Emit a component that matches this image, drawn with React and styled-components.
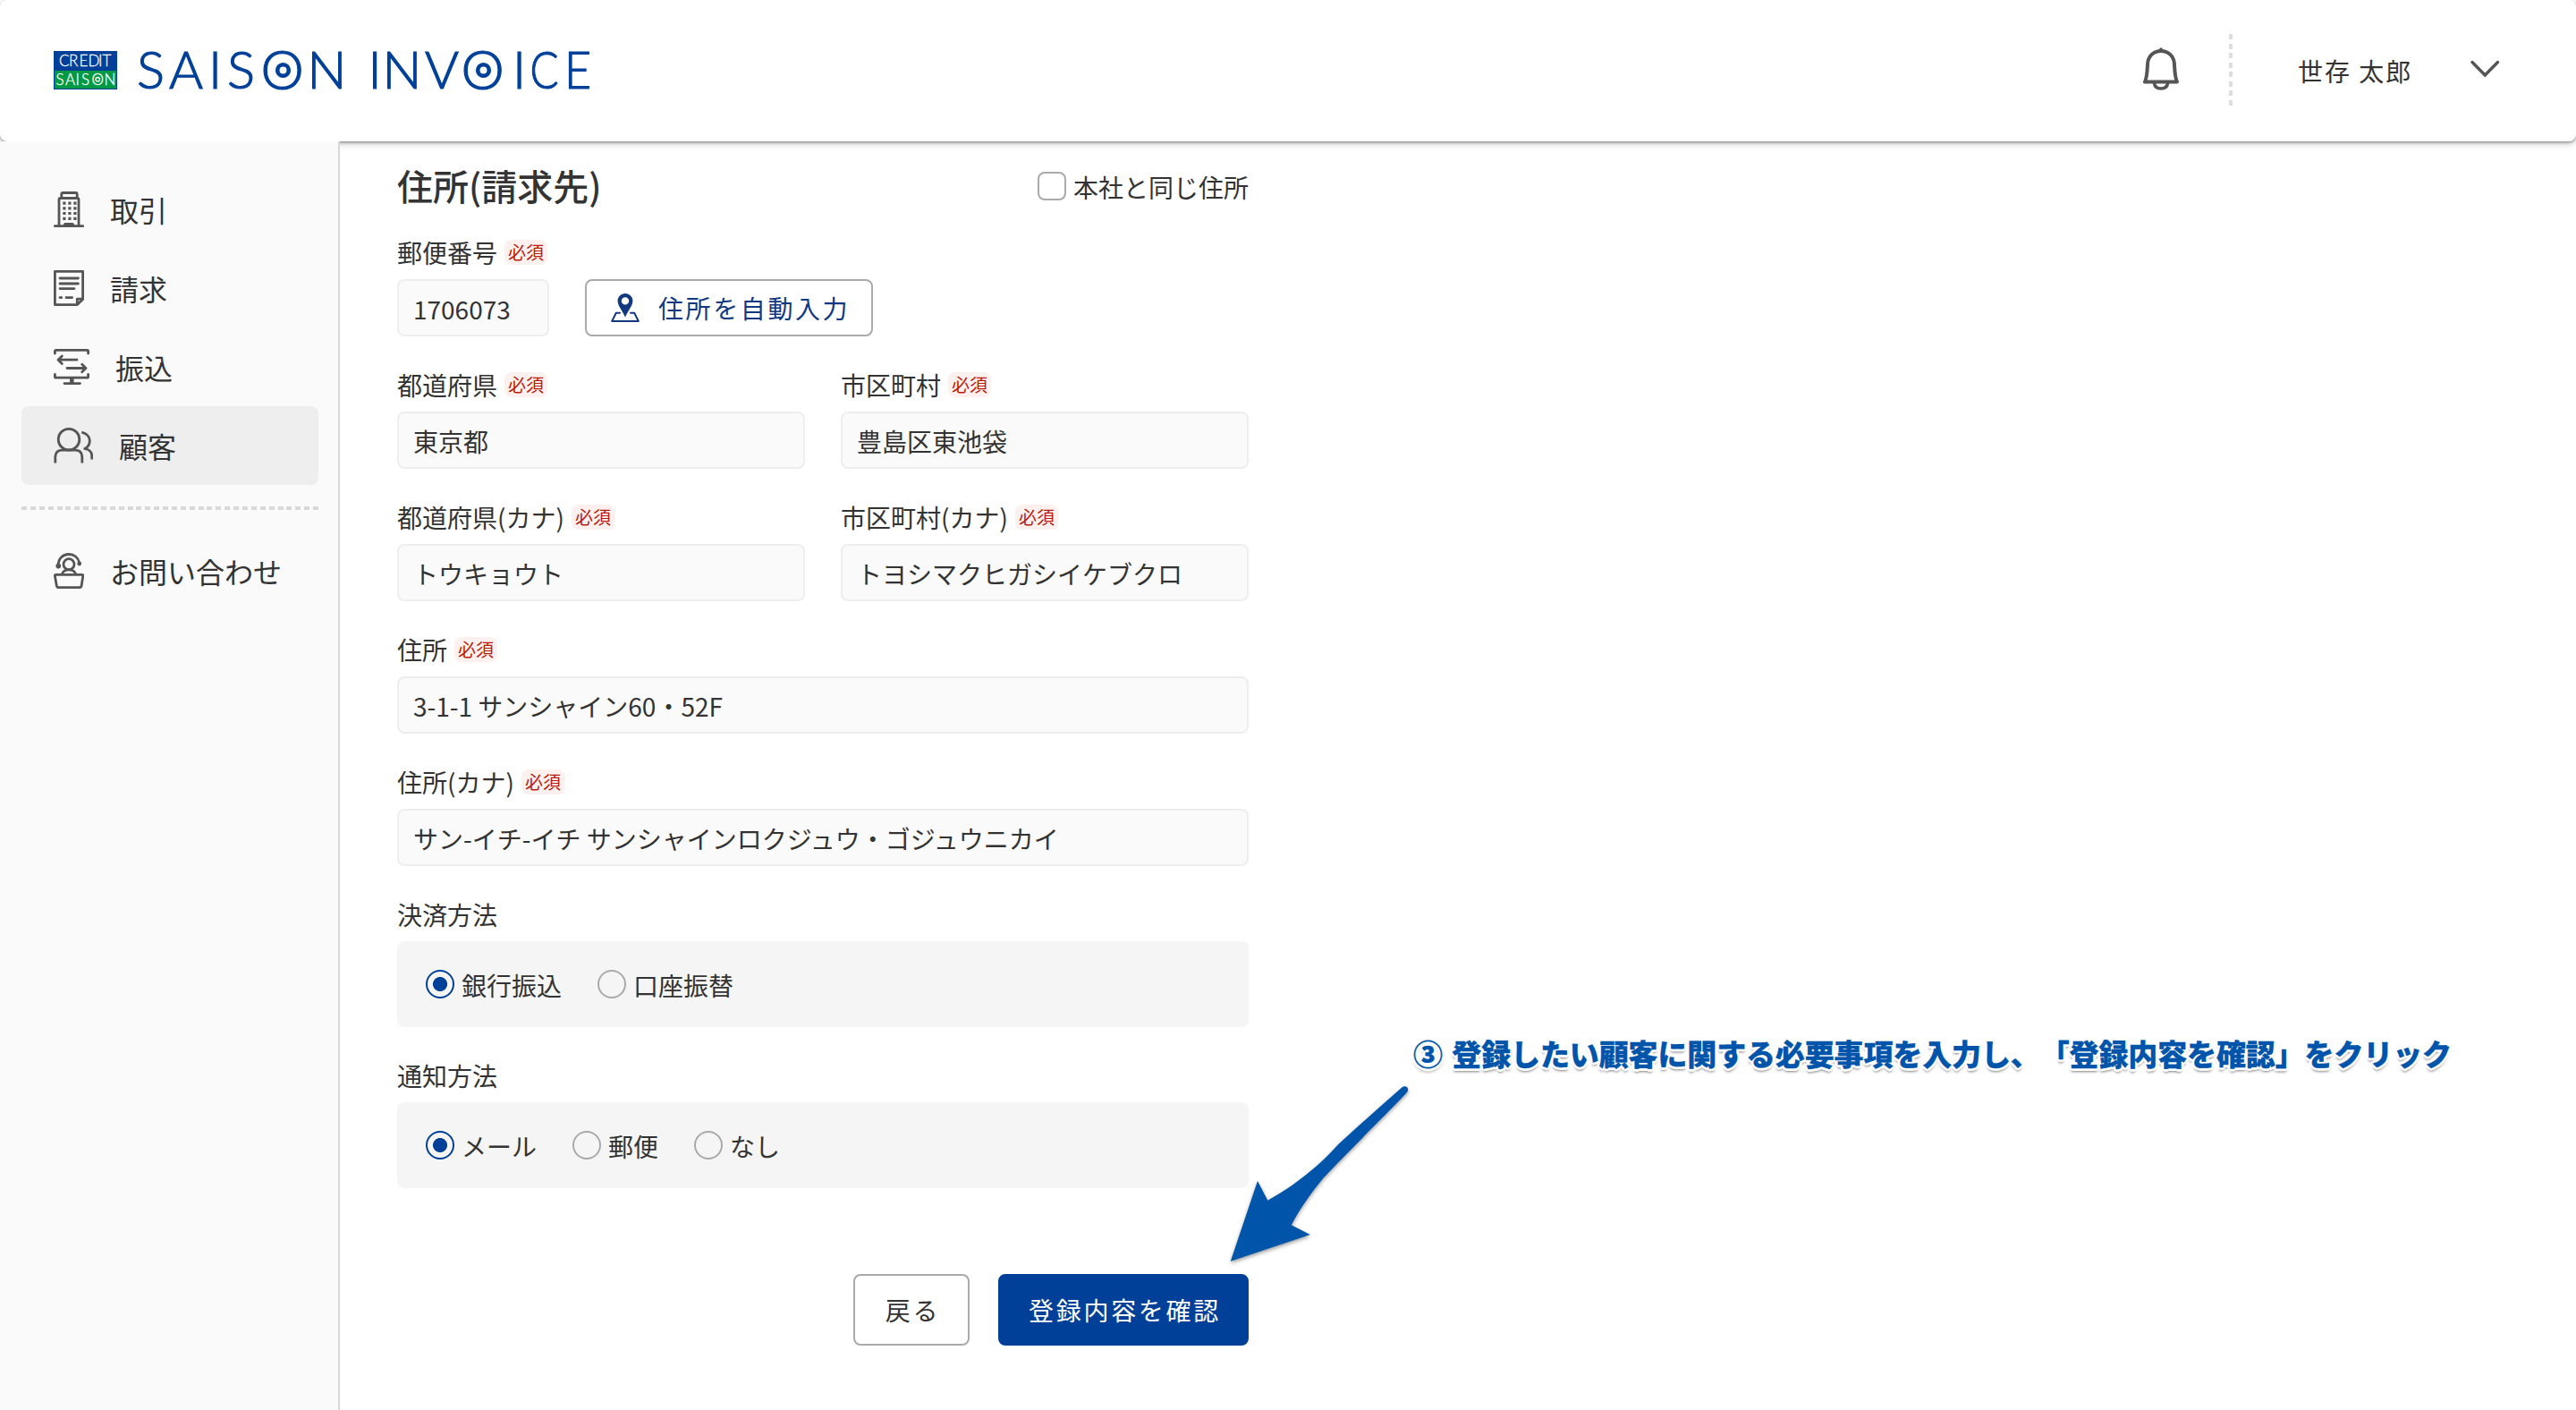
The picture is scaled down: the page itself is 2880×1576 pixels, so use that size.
import React, { useState } from 'react';
import styled, { createGlobalStyle } from 'styled-components';

const GlobalStyle = createGlobalStyle`
    * {
        box-sizing: border-box;
    }

    body {
        margin: 0;
        background: #fff;
        color: #333;
        font-family: 'Noto Sans CJK JP', 'Noto Sans', sans-serif;
        font-size: 28px;
        line-height: 1;
    }

    button, input {
        font: inherit;
        color: inherit;
    }
`;

const Page = styled.div`
    position: relative;
    height: 1576px;
    display: flex;
    flex-direction: column;
    overflow: hidden;
`;

const Header = styled.header`
    height: 158px;
    flex-shrink: 0;
    display: flex;
    align-items: center;
    justify-content: space-between;
    padding: 0 85px 0 60px;
    border-radius: 8px;
    background: #fff;
    box-shadow: 0 2px 2px rgba(0, 0, 0, 0.22), 0 2px 8px rgba(0, 0, 0, 0.26);
`;

const Brand = styled.svg`
    display: block;
    width: 640px;
    height: 100px;
    margin-bottom: 2px;
`;

const Account = styled.div`
    display: flex;
    align-items: center;
`;

const Bell = styled.svg`
    width: 40px;
    height: 48px;
    margin-right: 56px;
    margin-bottom: 4px;
`;

const HeaderRule = styled.div`
    width: 4px;
    height: 80px;
    margin-right: 73px;
    margin-bottom: 2px;
    background: repeating-linear-gradient(180deg, #ddd 0 6px, transparent 6px 10.57px);
`;

const UserName = styled.span`
    width: 192px;
    letter-spacing: 2px;
`;

const Chevron = styled.svg`
    width: 34px;
    height: 20px;
    margin-bottom: 4px;
`;

const Body = styled.div`
    flex: 1;
    display: flex;
`;

const Sidebar = styled.nav`
    position: relative;
    width: 380px;
    padding: 32px 22px 0 24px;
    border-right: 2px solid #d9d9d9;
    background: #fafafa;
`;

const NavItem = styled.a`
    height: 88px;
    display: flex;
    align-items: center;
    gap: 29px;
    padding-left: 36px;
    border-radius: 8px;
    background: ${({ $active }) => ($active ? '#eee' : 'transparent')};
    font-size: 32px;
`;

const NavIcon = styled.svg`
    width: ${({ $width }) => $width}px;
    height: 40px;
    flex-shrink: 0;
    fill: none;
    stroke: #555;
    stroke-width: 2.8;
    stroke-linecap: round;
    stroke-linejoin: round;
`;

const NavRule = styled.div`
    height: 4px;
    margin: 24px 0;
    background: repeating-linear-gradient(90deg, #d9d9d9 0 6px, transparent 6px 9.88px);
`;

const Form = styled.form`
    width: 952px;
    margin-left: 64px;
    padding-top: 30px;
`;

const TitleRow = styled.div`
    height: 40px;
    display: flex;
    align-items: center;
    justify-content: space-between;
    margin-bottom: 40px;
`;

const Title = styled.h2`
    margin: 0;
    padding-bottom: 3px;
    font-size: 40px;
    font-weight: 500;
`;

const CheckLabel = styled.label`
    display: flex;
    align-items: center;
    gap: 8px;
`;

const OptionText = styled.span`
    padding-top: 2px;
`;

const Checkbox = styled.input`
    appearance: none;
    width: 32px;
    height: 32px;
    margin: 0;
    border: 2px solid #aaa;
    border-radius: 8px;
    background: #fff;
`;

const Row = styled.div`
    display: flex;
    align-items: flex-end;
    gap: 40px;
    margin-bottom: 40px;
`;

const FieldBox = styled.div`
    flex: ${({ $width }) => ($width ? `0 0 ${$width}px` : '1 1 0')};
    min-width: 0;
`;

const LabelRow = styled.div`
    height: 28px;
    display: flex;
    align-items: center;
    gap: 8px;
    margin-bottom: 16px;
`;

const Required = styled.span`
    height: 28px;
    padding: 0 4px;
    border-radius: 8px;
    background: #fdf1f0;
    color: #b81c0c;
    font-size: 20px;
    line-height: 28px;
`;

const TextInput = styled.input`
    display: block;
    width: 100%;
    height: 64px;
    padding: 1px 16px 0;
    border: 2px solid #eee;
    border-radius: 8px;
    background: #fafafa;
`;

const AutoFill = styled.button`
    width: 322px;
    height: 64px;
    display: flex;
    align-items: center;
    gap: 21px;
    padding: 0 0 0 27px;
    border: 2px solid #aaa;
    border-radius: 8px;
    background: #fff;
    color: #12387f;
    letter-spacing: 2.6px;
    white-space: nowrap;
`;

const RadioGroup = styled.div`
    height: 96px;
    display: flex;
    align-items: center;
    gap: 40px;
    padding-left: 32px;
    border-radius: 8px;
    background: #f5f5f5;
`;

const RadioLabel = styled.label`
    display: flex;
    align-items: center;
    gap: 8px;
`;

const Radio = styled.input`
    appearance: none;
    width: 32px;
    height: 32px;
    margin: 0;
    border: 2px solid #aaa;
    border-radius: 50%;

    &:checked {
        border-color: #004098;
        background: radial-gradient(circle, #004098 7.6px, transparent 8.4px);
    }
`;

const Actions = styled.div`
    display: flex;
    justify-content: flex-end;
    gap: 32px;
    padding-top: 56px;
`;

const Button = styled.button`
    width: ${({ $primary }) => ($primary ? 280 : 130)}px;
    height: 80px;
    padding: 0 0 0 3px;
    border: 2px solid ${({ $primary }) => ($primary ? '#004098' : '#aaa')};
    border-radius: 8px;
    background: ${({ $primary }) => ($primary ? '#004098' : '#fff')};
    color: ${({ $primary }) => ($primary ? '#fff' : '#333')};
    letter-spacing: 2.7px;
`;

const Note = styled.div`
    position: absolute;
    left: 1580px;
    top: 1159px;
    color: #0055aa;
    font-size: 33px;
    font-weight: 900;
    line-height: 36px;
    letter-spacing: -0.13px;
    word-spacing: 3px;
    white-space: nowrap;
    text-spacing-trim: space-all;
    -webkit-text-stroke: 0.3px #0055aa;
    text-shadow:
        3px 0 #fff, -3px 0 #fff, 0 3px #fff, 0 -3px #fff,
        2px 2px #fff, -2px 2px #fff, 2px -2px #fff, -2px -2px #fff,
        0 4px 3px rgba(0, 0, 0, 0.5);
`;

const Arrow = styled.svg`
    position: absolute;
    left: 1366px;
    top: 1204px;
    width: 220px;
    height: 220px;
    fill: #0055aa;
    filter: drop-shadow(0 2px 2px rgba(0, 0, 0, 0.4));
`;

const Logo = () => (
    <Brand viewBox="60 28 640 100" fontFamily="Lato, sans-serif" fontWeight="300" fill="#004098">
        <rect x="60" y="57" width="71" height="43" />
        <rect x="61" y="79" width="69" height="20" fill="#009944" />
        <g fill="#fff" stroke="#fff" strokeWidth="0.3" fontSize="17">
            <text x="66 77 88.5 98.5 110 114.5" y="74">CREDIT</text>
            <text x="62.5 73 84.5 91 102.5 116.5" y="94.8">SAISON</text>
        </g>
        <circle cx="109.2" cy="88.7" r="2.2" fill="none" stroke="#fff" strokeWidth="1.4" />
        <text y="99.2" fontSize="58" stroke="#004098" strokeWidth="1.2">
            <tspan x="153 189 233 254">SAIS</tspan>
            <tspan x="291.5" y="100.4" fontSize="61">O</tspan>
            <tspan x="343.5" y="99.2">N</tspan>
        </text>
        <text y="99.2" fontSize="58" stroke="#004098" strokeWidth="1.2">
            <tspan x="411.5 427.5 475">INV</tspan>
            <tspan x="515.5" y="100.4" fontSize="61">O</tspan>
            <tspan x="573" y="99.2">I</tspan>
            <tspan x="592.5" textLength="32" lengthAdjust="spacingAndGlyphs">C</tspan>
            <tspan x="631" textLength="30" lengthAdjust="spacingAndGlyphs">E</tspan>
        </text>
        <g fill="none" stroke="#004098" strokeWidth="4.6">
            <circle cx="316.5" cy="78.5" r="6.3" />
            <circle cx="540.5" cy="78.5" r="6.3" />
        </g>
    </Brand>
);

const BuildingIcon = () => (
    <NavIcon viewBox="0 0 34 40" $width={34}>
        <path d="M1.3 38.6h31.4M6 38V9q0-1.5 1.5-1.5h19q1.5 0 1.5 1.5v29M8.8 7V3q0-1.5 1.5-1.5h14.4q1.5 0 1.5 1.5v4" />
        <path d="M11 38v-1q0-2 2-2h8q2 0 2 2v1z" fill="#555" stroke="none" />
        <g fill="#555" stroke="none">
            {[0, 1, 2].map((i) => (
                <path key={i} d={`M${10.3 + i * 6} 11.5h3.2v3.2h-3.2zm0 5.7h3.2v3.2h-3.2zm0 5.7h3.2v3.2h-3.2zm0 5.8h3.2v3.2h-3.2z`} />
            ))}
        </g>
    </NavIcon>
);

const InvoiceIcon = () => (
    <NavIcon viewBox="0 0 34 40" $width={34}>
        <path d="M1.4 1.4h31.2v31.1l-6.2 6.1h-25zM26.3 38v-5.8h6" />
        <path d="M7 9h20.4M7 15h20.4M7 20.6h16M7 30.6h1.8M14 30.6h6.6" />
    </NavIcon>
);

const TransferIcon = () => (
    <NavIcon viewBox="0 0 40 40" $width={40}>
        <path d="M1.4 5V2.6q0-1.2 1.2-1.2h34.8q1.2 0 1.2 1.2V5M1.4 28.5V31q0 1.2 1.2 1.2h34.8q1.2 0 1.2-1.2v-2.5M12 38.6h17.5" />
        <path d="M26 12.2H5.5M9.3 8 5 12.2l4.3 4.2M15 21.5h20.5M31.7 17.3l4.3 4.2-4.3 4.2" />
        <path d="M20.3 32.5V39" strokeWidth="4.6" strokeLinecap="butt" />
    </NavIcon>
);

const CustomersIcon = () => (
    <NavIcon viewBox="0 0 44 40" $width={44}>
        <circle cx="17" cy="13.2" r="11.8" />
        <path d="M1.8 39.5v-6.3q0-8 8-8h14q8 0 8 8v6.3M31.3 5.2c5.5 1.2 9 5 9 9.6 0 4-2 7-5.6 8.8 5 .4 8 3.8 8 8v4" strokeLinecap="butt" />
    </NavIcon>
);

const SupportIcon = () => (
    <NavIcon viewBox="0 0 34 40" $width={34}>
        <circle cx="17" cy="12.7" r="6" />
        <path d="M5.2 13.5C5.2 6 10.5 1.5 17 1.5c5.6 0 10.5 3.5 11.7 9.5" />
        <circle cx="5.3" cy="14.6" r="1.5" fill="#555" />
        <circle cx="28.7" cy="12" r="1" fill="#555" />
        <path d="M9.2 24c1-3.3 4-5.2 7.8-5.2s6.8 1.9 7.8 5.2M2.5 24.3h29q1.5 0 1.3 1.4l-1.7 11q-.3 2-2.3 2H5.6q-2 0-2.3-2l-1.9-11q-.2-1.4 1.1-1.4z" />
    </NavIcon>
);

const PinIcon = () => (
    <svg width="32" height="32" viewBox="0 0 32 32">
        <path
            fill="currentColor"
            fillRule="evenodd"
            d="M16 0c4.8 0 8.4 3.7 8.4 8.3 0 5.7-5 10.5-8.4 18.2C12.6 18.8 7.6 14 7.6 8.3 7.6 3.7 11.2 0 16 0zm0 4.2a4.2 4.2 0 1 0 0 8.4 4.2 4.2 0 0 0 0-8.4z"
        />
        <path
            fill="none"
            stroke="currentColor"
            strokeWidth="2"
            strokeLinecap="round"
            strokeLinejoin="round"
            d="M10 21.7H5.8L1.2 31h29.6l-4.6-9.3H22"
        />
    </svg>
);

const navItems = [
    { label: '取引', Icon: BuildingIcon },
    { label: '請求', Icon: InvoiceIcon },
    { label: '振込', Icon: TransferIcon },
    { label: '顧客', Icon: CustomersIcon, active: true },
];

const Field = ({ label, value, width }) => (
    <FieldBox $width={width}>
        <LabelRow>
            {label}
            <Required>必須</Required>
        </LabelRow>
        <TextInput defaultValue={value} />
    </FieldBox>
);

const RadioField = ({ label, name, options }) => {
    const [selected, setSelected] = useState(options[0]);

    return (
        <Row>
            <FieldBox>
                <LabelRow>{label}</LabelRow>
                <RadioGroup>
                    {options.map((option) => (
                        <RadioLabel key={option}>
                            <Radio
                                type="radio"
                                name={name}
                                checked={selected === option}
                                onChange={() => setSelected(option)}
                            />
                            <OptionText>{option}</OptionText>
                        </RadioLabel>
                    ))}
                </RadioGroup>
            </FieldBox>
        </Row>
    );
};

const App = () => {
    return <Page>
        <GlobalStyle />
        <Header>
            <Logo />
            <Account>
                <Bell viewBox="0 0 40 48" fill="none" stroke="#555" strokeWidth="4" strokeLinecap="round" strokeLinejoin="round">
                    <path d="M2 38.5h36C35.5 33 35.3 27 35 19 34.7 10 28.5 4 20 4S5.3 10 5 19c-.3 8-.5 14-3 19.5z" />
                    <path d="M12.5 40c.5 4 3.7 6 7.5 6s7-2 7.5-6M20 2v1" strokeWidth="3.6" />
                </Bell>
                <HeaderRule />
                <UserName>世存 太郎</UserName>
                <Chevron viewBox="0 0 34 20" fill="none" stroke="#555" strokeWidth="3.4" strokeLinecap="round" strokeLinejoin="miter">
                    <path d="M3 2.5 17.3 17 31.5 2.5" />
                </Chevron>
            </Account>
        </Header>
        <Body>
            <Sidebar>
                {navItems.map(({ label, Icon, active }) => (
                    <NavItem key={label} $active={active}>
                        <Icon />
                        {label}
                    </NavItem>
                ))}
                <NavRule />
                <NavItem>
                    <SupportIcon />
                    お問い合わせ
                </NavItem>
            </Sidebar>
            <Form>
                <TitleRow>
                    <Title>住所(請求先)</Title>
                    <CheckLabel>
                        <Checkbox type="checkbox" />
                        <OptionText>本社と同じ住所</OptionText>
                    </CheckLabel>
                </TitleRow>
                <Row>
                    <Field label="郵便番号" value="1706073" width={170} />
                    <AutoFill type="button">
                        <PinIcon />
                        住所を自動入力
                    </AutoFill>
                </Row>
                <Row>
                    <Field label="都道府県" value="東京都" />
                    <Field label="市区町村" value="豊島区東池袋" />
                </Row>
                <Row>
                    <Field label="都道府県(カナ)" value="トウキョウト" />
                    <Field label="市区町村(カナ)" value="トヨシマクヒガシイケブクロ" />
                </Row>
                <Row>
                    <Field label="住所" value="3-1-1 サンシャイン60・52F" />
                </Row>
                <Row>
                    <Field label="住所(カナ)" value="サン-イチ-イチ サンシャインロクジュウ・ゴジュウニカイ" />
                </Row>
                <RadioField label="決済方法" name="payment" options={['銀行振込', '口座振替']} />
                <RadioField label="通知方法" name="notice" options={['メール', '郵便', 'なし']} />
                <Actions>
                    <Button type="button">戻る</Button>
                    <Button type="button" $primary>登録内容を確認</Button>
                </Actions>
            </Form>
        </Body>
        <Note>③ 登録したい顧客に関する必要事項を入力し、「登録内容を確認」をクリック</Note>
        <Arrow viewBox="1366 1204 220 220">
            <path d="M1375.8 1409.7 1406 1320l11.3 21.7c30-16 60-41 79-62.7q35-32 71-63.5c4-3.5 9 .5 6 5-14 16-50 50-94 96.5-14 17-26 34-35.500 52.300l21 10.700z" />
        </Arrow>
    </Page>;
}

export default App
